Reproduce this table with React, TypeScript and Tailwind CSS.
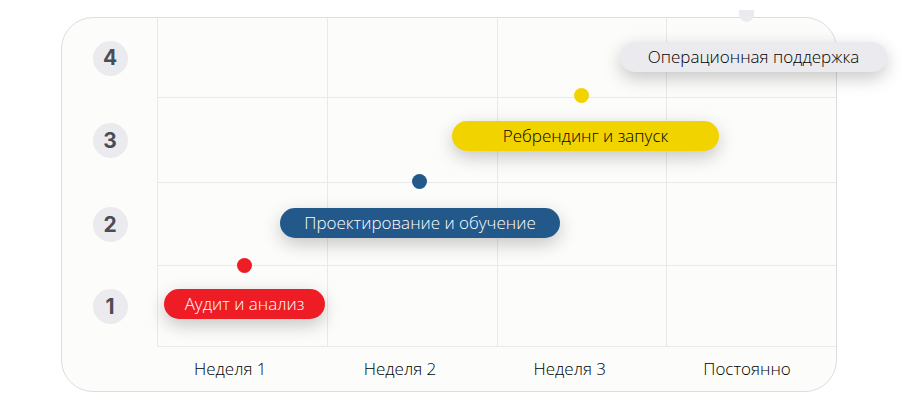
const weeks = ['Неделя 1', 'Неделя 2', 'Неделя 3', 'Постоянно'];
const levels = [4, 3, 2, 1];
const rowHeights = ['h-[80px]', 'h-[85px]', 'h-[83px]', 'h-[81px]'];

type Stage = {
  label: string;
  pill: string;
  dot: string;
};

const stages: Stage[] = [
  {
    label: 'Аудит и анализ',
    pill: 'left-[102px] top-[271px] w-[161px] bg-[#ee1c25] text-white',
    dot: 'left-[175px] top-[240px] bg-[#ee1c25]',
  },
  {
    label: 'Проектирование и обучение',
    pill: 'left-[218px] top-[190px] w-[280px] bg-[#23588a] text-white',
    dot: 'left-[350px] top-[156px] bg-[#23588a]',
  },
  {
    label: 'Ребрендинг и запуск',
    pill: 'left-[390px] top-[103px] w-[267px] bg-[#f1d300] text-black',
    dot: 'left-[512px] top-[70px] bg-[#f1d300]',
  },
  {
    label: 'Операционная поддержка',
    pill: 'left-[558px] top-[24px] w-[267px] bg-[#ebebef] text-black',
    dot: '',
  },
];

export default function App() {
  return (
    <div
      className="min-h-screen bg-white pt-[17px] pl-[61px]"
      style={{ fontFamily: '"Open Sans", "Noto Sans", sans-serif' }}
    >
      <div className="relative w-[776px] h-[375px] rounded-[32px] border border-[#dddddd] bg-[#fcfdfb]">
        <div className="flex h-full">
          {/* y axis */}
          <div className="w-[95px] flex flex-col">
            {levels.map((n, i) => (
              <div
                key={n}
                className={`${rowHeights[i]} flex items-center justify-center pl-[1px]`}
              >
                <span
                  className="flex h-[35px] w-[35px] items-center justify-center rounded-full bg-[#ebebef] text-[21px] font-bold text-[#4c4c56]"
                  style={{ fontFamily: 'Inter, sans-serif' }}
                >
                  {n}
                </span>
              </div>
            ))}
          </div>

          {/* plot */}
          <div className="flex-1 flex flex-col">
            {levels.map((n, i) => (
              <div key={n} className={`${rowHeights[i]} grid grid-cols-4`}>
                {weeks.map((w) => (
                  <div key={w} className="border-l border-b border-[#e8e9e8]" />
                ))}
              </div>
            ))}
            <div className="grid flex-1 grid-cols-4 items-center pb-[1px]">
              {weeks.map((w) => (
                <div key={w} className="pl-[37px] text-[17px] font-[350] text-black">
                  {w}
                </div>
              ))}
            </div>
          </div>
        </div>

        {/* stages */}
        {stages.map((s) => (
          <div key={s.label}>
            {s.dot && (
              <span className={`absolute h-[15px] w-[15px] rounded-full ${s.dot}`} />
            )}
            <div
              className={`absolute flex h-[30px] items-center justify-center rounded-full text-[17px] font-[350] shadow-[0_6px_18px_rgba(0,0,0,0.22)] ${s.pill}`}
            >
              {s.label}
            </div>
          </div>
        ))}
        <span className="absolute left-[677px] top-[-8px] h-[12px] w-[15px] rounded-b-full bg-[#ebebef]" />
      </div>
    </div>
  );
}
